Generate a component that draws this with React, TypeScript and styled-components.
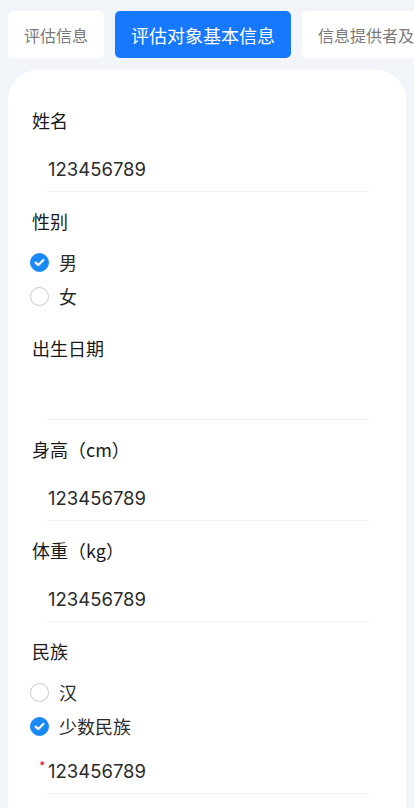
import React from "react";
import styled, { createGlobalStyle } from "styled-components";

const GlobalStyle = createGlobalStyle`
  * { box-sizing: border-box; }
  html, body { margin: 0; padding: 0; background: #f1f4f9; }
  body { font-family: "Noto Sans CJK SC", sans-serif; }
`;

const Page = styled.div`
  padding: 11px 8px 0;
  display: flex;
  flex-direction: column;
  gap: 12px;
`;

const TabBar = styled.div`
  display: flex;
  gap: 11px;
  overflow: hidden;
  margin-right: -8px;
`;

const Tab = styled.div<{ $active?: boolean }>`
  flex: none;
  height: 47px;
  padding: 0 16px;
  border-radius: 5px;
  display: flex;
  align-items: center;
  white-space: nowrap;
  background: ${(p) => (p.$active ? "#1677ff" : "#ffffff")};
  color: ${(p) => (p.$active ? "#ffffff" : "#7a7a7a")};
  font-size: ${(p) => (p.$active ? "18px" : "16px")};
  font-family: "Noto Sans CJK SC", sans-serif;
`;

const Card = styled.div`
  background: #ffffff;
  border-radius: 30px 30px 0 0;
  padding: 37px 23px 40px;
  display: flex;
  flex-direction: column;
  gap: 16px;
`;

const Field = styled.div<{ $extraBottom?: number }>`
  display: flex;
  flex-direction: column;
  padding-bottom: ${(p) => p.$extraBottom ?? 0}px;
`;

const Label = styled.div`
  height: 26px;
  line-height: 26px;
  font-size: 18px;
  color: #1a1a1a;
  padding-left: 1px;
`;

const InputRow = styled.div<{ $mt?: number }>`
  position: relative;
  margin-top: ${(p) => p.$mt ?? 13}px;
  margin-left: 16px;
  width: 322px;
  padding: 10px 0 9px 1px;
  height: 46px;
  border-bottom: 1px solid #eef0f3;
  font-family: Inter, "Noto Sans CJK SC", sans-serif;
  font-size: 18.5px;
  line-height: 26px;
  color: #2b2b2b;
`;

const Required = styled.span`
  position: absolute;
  left: -8px;
  top: 8px;
  color: #ee0a24;
  font-size: 14px;
  line-height: 20px;
  font-family: "Noto Sans CJK SC", sans-serif;
`;

const RadioGroup = styled.div`
  margin-top: 11px;
  display: flex;
  flex-direction: column;
`;

const RadioRow = styled.div`
  height: 34px;
  display: flex;
  align-items: center;
  gap: 10px;
  font-size: 18px;
  color: #2b2b2b;
  margin-left: -1px;
`;

const RadioCircle = styled.span<{ $checked?: boolean }>`
  width: 19px;
  height: 19px;
  border-radius: 50%;
  flex: none;
  display: flex;
  align-items: center;
  justify-content: center;
  background: ${(p) => (p.$checked ? "#1989fa" : "#ffffff")};
  border: 1px solid ${(p) => (p.$checked ? "#1989fa" : "#c8c9cc")};
`;

const Radio = ({ checked, label }: { checked?: boolean; label: string }) => (
  <RadioRow>
    <RadioCircle $checked={checked}>
      {checked && (
        <svg width="13" height="13" viewBox="0 0 13 13">
          <path
            d="M2.6 6.6 L5.3 9.1 L10.4 3.9"
            fill="none"
            stroke="#ffffff"
            strokeWidth="2.2"
            strokeLinecap="round"
            strokeLinejoin="round"
          />
        </svg>
      )}
    </RadioCircle>
    <span>{label}</span>
  </RadioRow>
);

export default function App() {
  return (
    <>
      <GlobalStyle />
      <Page>
        <TabBar>
          <Tab>评估信息</Tab>
          <Tab $active>评估对象基本信息</Tab>
          <Tab>信息提供者及联系人信息</Tab>
        </TabBar>
        <Card>
          <Field>
            <Label>姓名</Label>
            <InputRow>123456789</InputRow>
          </Field>
          <Field $extraBottom={6}>
            <Label>性别</Label>
            <RadioGroup>
              <Radio checked label="男" />
              <Radio label="女" />
            </RadioGroup>
          </Field>
          <Field>
            <Label>出生日期</Label>
            <InputRow />
          </Field>
          <Field>
            <Label>身高（cm）</Label>
            <InputRow>123456789</InputRow>
          </Field>
          <Field>
            <Label>体重（kg）</Label>
            <InputRow>123456789</InputRow>
          </Field>
          <Field>
            <Label>民族</Label>
            <RadioGroup>
              <Radio label="汉" />
              <Radio checked label="少数民族" />
            </RadioGroup>
            <InputRow $mt={5}>
              <Required>*</Required>
              123456789
            </InputRow>
          </Field>
        </Card>
      </Page>
    </>
  );
}
